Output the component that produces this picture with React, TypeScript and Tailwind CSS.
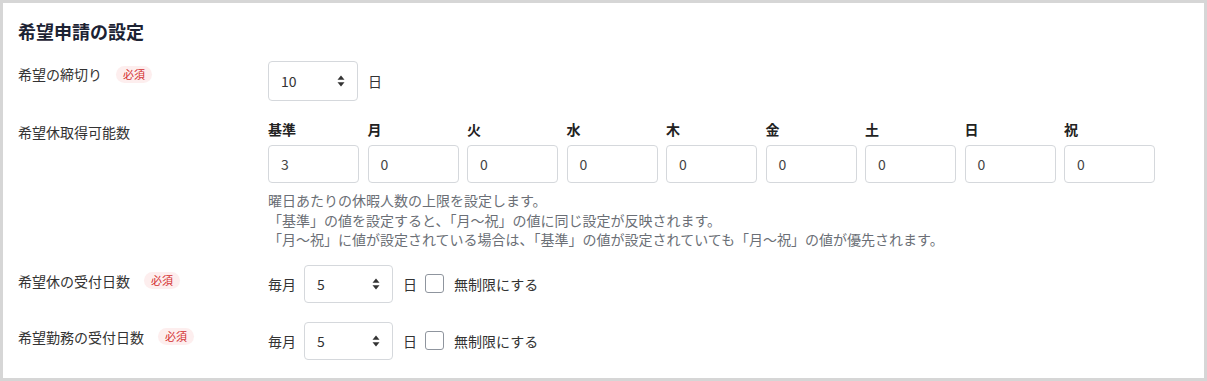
import React from 'react';

const FONT = { fontFamily: '"Noto Sans CJK JP", "Noto Sans", Roboto, sans-serif' };

const days = [
  { label: '基準', value: '3' },
  { label: '月', value: '0' },
  { label: '火', value: '0' },
  { label: '水', value: '0' },
  { label: '木', value: '0' },
  { label: '金', value: '0' },
  { label: '土', value: '0' },
  { label: '日', value: '0' },
  { label: '祝', value: '0' },
];

function Required() {
  return (
    <span className="ml-[14px] inline-flex h-[17px] items-center rounded-full bg-[#fdeeee] px-[7px] text-[11px] leading-none text-[#d32f2f]">
      必須
    </span>
  );
}

function SortArrows() {
  return (
    <svg width="8" height="12" viewBox="0 0 8 12" className="text-[#333]">
      <path d="M4 0.5 L7.5 4.8 H0.5 Z" fill="currentColor" />
      <path d="M4 11.5 L7.5 7.2 H0.5 Z" fill="currentColor" />
    </svg>
  );
}

function FakeSelect({ value, className }: { value: string; className: string }) {
  return (
    <div
      className={`flex items-center justify-between rounded-[4px] border border-[#d5d8dc] bg-white pl-3 pr-3 text-sm text-[#333] ${className}`}
    >
      <span>{value}</span>
      <SortArrows />
    </div>
  );
}

function Label({ text, required, className = '' }: { text: string; required?: boolean; className?: string }) {
  return (
    <div className={`flex items-center self-start text-sm leading-5 text-[#333] ${className}`}>
      <span>{text}</span>
      {required && <Required />}
    </div>
  );
}

function AcceptRow({ label, className = '', labelPad }: { label: string; className?: string; labelPad: string }) {
  return (
    <div className={`grid grid-cols-[250px_1fr] ${className}`}>
      <Label text={label} required className={labelPad} />
      <div className="flex items-center text-sm text-[#333]">
        <span>毎月</span>
        <FakeSelect value="5" className="ml-[8px] h-[38px] w-[89px]" />
        <span className="ml-[10px]">日</span>
        <span className="ml-[8px] h-[19px] w-[19px] rounded-[3px] border border-[#8f959e] bg-white" />
        <span className="ml-[10px]">無制限にする</span>
      </div>
    </div>
  );
}

export default function App() {
  return (
    <div style={FONT} className="h-[381px] w-[1207px] border-[3px] border-[#d6d6d6] bg-white px-[15px] pt-[16px]">
      <h2 className="text-lg font-bold leading-6 text-[#1c2233]">希望申請の設定</h2>

      {/* 締切り */}
      <div className="mt-[18px] grid grid-cols-[250px_1fr]">
        <Label text="希望の締切り" required className="pt-[3px]" />
        <div className="flex items-center text-sm text-[#333]">
          <FakeSelect value="10" className="h-[40px] w-[90px]" />
          <span className="ml-[10px]">日</span>
        </div>
      </div>

      {/* 取得可能数 */}
      <div className="mt-[18px] grid grid-cols-[250px_1fr]">
        <Label text="希望休取得可能数" className="pt-[3px]" />
        <div>
          <div className="flex gap-[8.5px]">
            {days.map((d) => (
              <div key={d.label} className="w-[91px]">
                <div className="text-sm font-bold leading-5 text-[#222]">{d.label}</div>
                <div className="mt-[6px] flex h-[38px] items-center rounded-[4px] border border-[#d5d8dc] bg-white pl-3 text-sm text-[#444]">
                  {d.value}
                </div>
              </div>
            ))}
          </div>
          <div className="mt-[8px] text-sm leading-[19.5px] text-[#6b6f76]">
            <div>曜日あたりの休暇人数の上限を設定します。</div>
            <div>「基準」の値を設定すると、「月～祝」の値に同じ設定が反映されます。</div>
            <div>「月～祝」に値が設定されている場合は、「基準」の値が設定されていても「月～祝」の値が優先されます。</div>
          </div>
        </div>
      </div>

      <AcceptRow label="希望休の受付日数" className="mt-[15px]" labelPad="pt-[6px]" />
      <AcceptRow label="希望勤務の受付日数" className="mt-[19px]" labelPad="pt-[5px]" />
    </div>
  );
}
